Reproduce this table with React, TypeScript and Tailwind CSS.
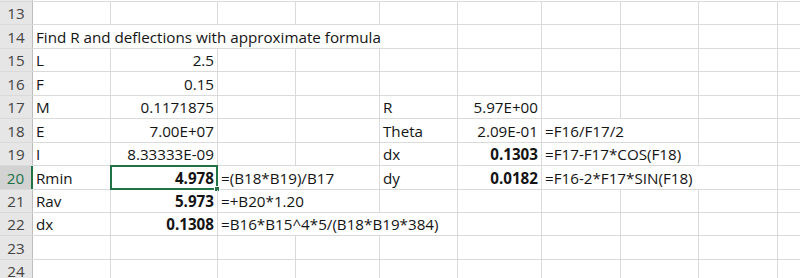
const COL_W = [78, 107, 78, 84, 78, 84, 79, 78, 79, 60]
const ROW_H = [23, 24, 23, 24, 23, 24, 23, 24, 23, 23, 24, 23]

type Cell = { col: number; span?: number; text: string; right?: boolean; bold?: boolean }
type SheetRow = { n: number; cells: Cell[] }

const rows: SheetRow[] = [
  { n: 13, cells: [] },
  { n: 14, cells: [{ col: 0, span: 5, text: 'Find R and deflections with approximate formula' }] },
  { n: 15, cells: [{ col: 0, text: 'L' }, { col: 1, text: '2.5', right: true }] },
  { n: 16, cells: [{ col: 0, text: 'F' }, { col: 1, text: '0.15', right: true }] },
  {
    n: 17,
    cells: [
      { col: 0, text: 'M' },
      { col: 1, text: '0.1171875', right: true },
      { col: 4, text: 'R' },
      { col: 5, text: '5.97E+00', right: true },
    ],
  },
  {
    n: 18,
    cells: [
      { col: 0, text: 'E' },
      { col: 1, text: '7.00E+07', right: true },
      { col: 4, text: 'Theta' },
      { col: 5, text: '2.09E-01', right: true },
      { col: 6, span: 2, text: '=F16/F17/2' },
    ],
  },
  {
    n: 19,
    cells: [
      { col: 0, text: 'I' },
      { col: 1, text: '8.33333E-09', right: true },
      { col: 4, text: 'dx' },
      { col: 5, text: '0.1303', right: true, bold: true },
      { col: 6, span: 2, text: '=F17-F17*COS(F18)' },
    ],
  },
  {
    n: 20,
    cells: [
      { col: 0, text: 'Rmin' },
      { col: 1, text: '4.978', right: true, bold: true },
      { col: 2, span: 2, text: '=(B18*B19)/B17' },
      { col: 4, text: 'dy' },
      { col: 5, text: '0.0182', right: true, bold: true },
      { col: 6, span: 3, text: '=F16-2*F17*SIN(F18)' },
    ],
  },
  {
    n: 21,
    cells: [
      { col: 0, text: 'Rav' },
      { col: 1, text: '5.973', right: true, bold: true },
      { col: 2, span: 2, text: '=+B20*1.20' },
    ],
  },
  {
    n: 22,
    cells: [
      { col: 0, text: 'dx' },
      { col: 1, text: '0.1308', right: true, bold: true },
      { col: 2, span: 3, text: '=B16*B15^4*5/(B18*B19*384)' },
    ],
  },
  { n: 23, cells: [] },
  { n: 24, cells: [] },
]

// selected cell is B20
const ACTIVE_ROW = 20
const ACTIVE_COL = 1

function SheetRowView({ row, height }: { row: SheetRow; height: number }) {
  const active = row.n === ACTIVE_ROW
  const out: React.ReactNode[] = []
  let c = 0
  while (c < COL_W.length) {
    const cell = row.cells.find((x) => x.col === c)
    const span = cell?.span ?? 1
    let w = 0
    for (let i = c; i < c + span; i++) w += COL_W[i]
    const selected = active && c === ACTIVE_COL
    out.push(
      <div
        key={c}
        className={`relative flex shrink-0 items-end border-r border-[#dadada] px-[3px] pb-[1px] ${
          cell?.right ? 'justify-end' : 'justify-start'
        }`}
        style={{ width: w }}
      >
        {cell && (
          <span className={`whitespace-nowrap leading-[20px] text-[#141414] ${cell.bold ? 'font-bold' : ''}`}>
            {cell.text}
          </span>
        )}
        {selected && (
          <>
            <div className="pointer-events-none absolute -left-px -top-px -bottom-px -right-px border-2 border-[#217346]" />
            <div className="absolute -bottom-[3px] -right-[3px] h-[6px] w-[6px] border border-white bg-[#217346]" />
          </>
        )}
      </div>
    )
    c += span
  }

  return (
    <div className="flex border-b border-[#dadada]" style={{ height }}>
      <div
        className={`flex w-[33px] shrink-0 items-end justify-center pb-[1px] leading-[20px] ${
          active
            ? 'border-r-2 border-[#217346] bg-[#d2d2d2] text-[#217346]'
            : 'border-r border-[#bdbdbd] bg-[#e6e6e6] text-[#444]'
        }`}
      >
        {row.n}
      </div>
      {out}
    </div>
  )
}

export default function App() {
  return (
    <div
      className="h-[278px] w-[800px] overflow-hidden bg-white text-[15.2px]"
      style={{ fontFamily: '"Open Sans", "Noto Sans", sans-serif' }}
    >
      <div className="flex h-[2px] border-b border-[#dadada]">
        <div className="w-[33px] border-r border-[#bdbdbd] bg-[#e6e6e6]" />
      </div>
      {rows.map((r, i) => (
        <SheetRowView key={r.n} row={r} height={ROW_H[i]} />
      ))}
    </div>
  )
}
